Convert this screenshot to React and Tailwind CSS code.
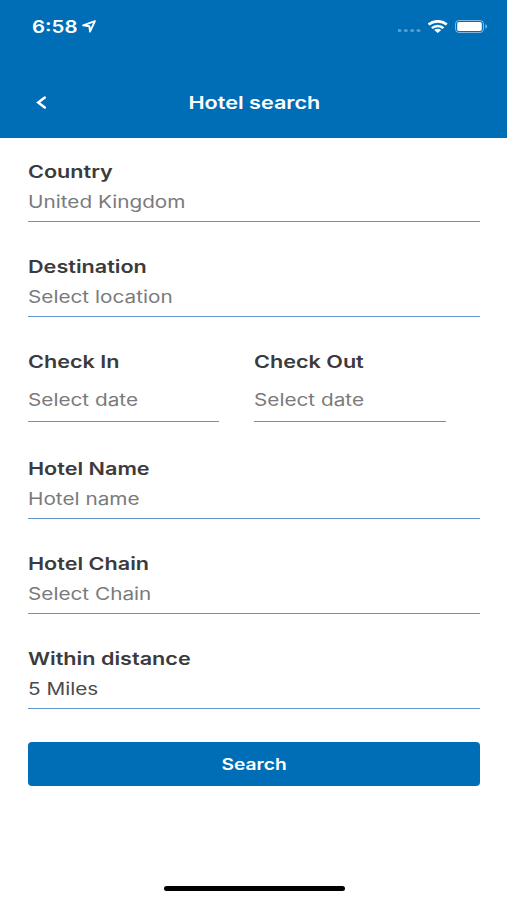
import clsx from "clsx";

function StatusBar() {
  return (
    <div className="flex h-[53px] items-center justify-between pl-8 pr-[19px]">
      <div className="flex items-center">
        <span className="w-[50px] whitespace-nowrap text-[17px] font-semibold leading-6">
          <span className="inline-block origin-left scale-x-[1.2]">6:58</span>
        </span>
        <svg className="h-[13px] w-[14px]" viewBox="0 0 14 13" fill="none" stroke="currentColor">
          <path strokeWidth="1.9" strokeLinejoin="round" d="M12.9 1.2 1.2 5.4l6.2.9.6 5.3z" />
        </svg>
      </div>
      <div className="flex items-center">
        <svg className="mr-[7px] h-[13px] w-[23px]" viewBox="0 0 23 13" fill="currentColor" opacity="0.35">
          <ellipse cx="1.5" cy="10.5" rx="2" ry="1.6" />
          <ellipse cx="7.8" cy="10.5" rx="2" ry="1.6" />
          <ellipse cx="14.1" cy="10.5" rx="2" ry="1.6" />
          <ellipse cx="20.5" cy="10.5" rx="2" ry="1.6" />
        </svg>
        <svg className="mr-[7px] h-[13px] w-5" viewBox="0 0 20 13" fill="none" stroke="currentColor">
          <path strokeWidth="2.7" d="M.6 4.6C5.700.2 13.700.2 18.800 4.600" />
          <path strokeWidth="2.5" d="M3.900 8.100c3.200-2.900 8.400-2.900 11.600 0" />
          <path fill="currentColor" stroke="none" d="M6.200 10c1.900-1.600 5.100-1.600 7 0l-3.500 2.900z" />
        </svg>
        <svg className="h-[13px] w-[33px]" viewBox="0 0 33 13" fill="none">
          <rect x=".5" y=".5" width="28" height="12" rx="3.5" stroke="currentColor" opacity="0.5" />
          <rect x="2.2" y="2" width="24.6" height="9" rx="1.8" fill="currentColor" />
          <path d="M30.3 4.3c2.500.8 2.500 3.600 0 4.400z" fill="currentColor" opacity="0.5" />
        </svg>
      </div>
    </div>
  );
}

function Header({ title }) {
  return (
    <header className="h-[138px] bg-[#006db7] text-white">
      <StatusBar />
      <div className="grid h-[98px] grid-cols-[68px_1fr_68px] items-center">
        <button className="flex pl-9 pt-px" aria-label="Back">
          <svg className="h-[13px] w-[11px]" viewBox="0 0 11 13" fill="none" stroke="currentColor">
            <path strokeWidth="2.5" strokeLinecap="round" d="M8.800 1.500 2.200 6.500l6.600 5" />
          </svg>
        </button>
        <h1 className="pl-px pt-px text-center text-[17.5px] font-semibold leading-6">
          <span className="inline-block scale-x-[1.235]">{title}</span>
        </h1>
      </div>
    </header>
  );
}

function Field({ label, value, filled, tall }) {
  return (
    <div className="border-b border-[#6494cd]">
      <div className="text-[17.5px] font-semibold leading-6 text-[#3b3b3d]">
        <span className="inline-block origin-left scale-x-[1.235]">{label}</span>
      </div>
      <div
        className={clsx(
          "text-[17px] leading-6",
          tall ? "pb-[9px] pt-3.5" : "pb-[7px] pt-1.5",
          filled ? "text-[#4a4a4c]" : "text-[#7a7a7c]"
        )}
      >
        <span className="inline-block origin-left scale-x-[1.22]">{value}</span>
      </div>
    </div>
  );
}

export default function App() {
  return (
    <div className="flex h-[900px] w-[507px] flex-col bg-white font-['Inter',sans-serif]">
      <Header title="Hotel search" />
      <main className="flex flex-1 flex-col pl-7 pr-[27px] pt-[22px]">
        <div className="flex flex-col gap-[33px]">
          <Field label="Country" value="United Kingdom" />
          <Field label="Destination" value="Select location" />
          <div className="grid grid-cols-[191px_192px] gap-[35px]">
            <Field label="Check In" value="Select date" tall />
            <Field label="Check Out" value="Select date" tall />
          </div>
          <div className="flex flex-col gap-[33px] pt-0.5">
            <Field label="Hotel Name" value="Hotel name" />
            <Field label="Hotel Chain" value="Select Chain" />
            <Field label="Within distance" value="5 Miles" filled />
          </div>
        </div>
        <button className="mt-[33px] h-11 rounded-sm bg-[#006db7] text-[16px] font-semibold text-white">
          <span className="inline-block scale-x-[1.2]">Search</span>
        </button>
      </main>
      <div className="mb-[9px] ml-[164px] h-[5px] w-[181px] rounded-full bg-black" />
    </div>
  );
}
